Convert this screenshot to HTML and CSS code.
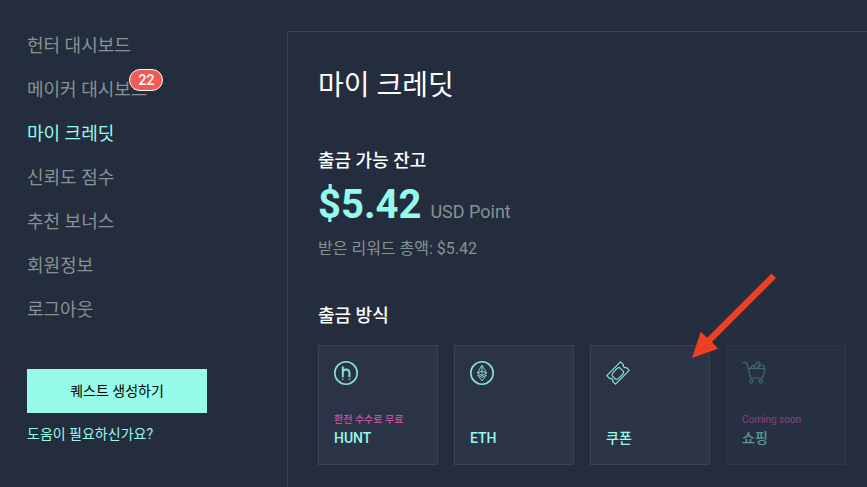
FILE: index.html
```html
<!DOCTYPE html>
<html lang="ko">
<head>
    <meta charset="UTF-8">
    <meta name="viewport" content="width=device-width, initial-scale=1.0">
    <title>마이 크레딧</title>
    <link rel="stylesheet" href="styles.css">
</head>
<body>
    <div class="page">
        <aside class="sidebar">
            <nav class="menu">
                <a href="#">헌터 대시보드</a>
                <a href="#">메이커 대시보드<span class="badge">22</span></a>
                <a href="#" class="active">마이 크레딧</a>
                <a href="#">신뢰도 점수</a>
                <a href="#">추천 보너스</a>
                <a href="#">회원정보</a>
                <a href="#">로그아웃</a>
            </nav>
            <button type="button" class="create-button">퀘스트 생성하기</button>
            <a href="#" class="help-link">도움이 필요하신가요?</a>
        </aside>

        <main class="panel">
            <h1>마이 크레딧</h1>

            <section class="balance">
                <h2>출금 가능 잔고</h2>
                <p class="amount"><strong>$5.42</strong> <span>USD Point</span></p>
                <p class="total">받은 리워드 총액: $5.42</p>
            </section>

            <section class="withdraw">
                <h2>출금 방식</h2>
                <ul class="methods">
                    <li>
                        <button type="button" class="card">
                            <svg class="icon" viewBox="0 0 24 24" aria-hidden="true">
                                <circle cx="12" cy="12" r="11.2" stroke-width="1.6"/>
                                <path d="M8.800 5.500v10.700M8.800 11.700c0-4.300 6.600-4.300 6.600 0v4.500" stroke-width="1.900"/>
                                <path d="M8.800 17.400v1.500M15.400 17.400v1.500" stroke-width="1.600" opacity=".7"/>
                            </svg>
                            <span class="note">환전 수수료 무료</span>
                            <span class="name">HUNT</span>
                        </button>
                    </li>
                    <li>
                        <button type="button" class="card">
                            <svg class="icon" viewBox="0 0 24 24" aria-hidden="true">
                                <circle cx="12" cy="12" r="11.2" stroke-width="1.6"/>
                                <path d="M12 4.200L7.400 12l4.600 2.600 4.600-2.600zM7.400 12l4.600-1.900 4.600 1.900M12 4.200v10.400M7.600 14l4.400 5.800 4.400-5.800-4.400 2.400z" stroke-width=".9"/>
                            </svg>
                            <span class="name">ETH</span>
                        </button>
                    </li>
                    <li>
                        <button type="button" class="card">
                            <svg class="icon" viewBox="0 0 24 24" aria-hidden="true">
                                <path d="M14.500.8l3 3c-.8 1.500 1 3.500 2.800 2.700l2.900 2.900L9.500 23.200l-2.900-2.900c.8-1.700-1-3.500-2.800-2.700l-3-3z"/>
                                <path d="M13.300 6.400l4.300 4.300c.2 1.400-.3 2-1 2.700l-4.300 4.200c-.8.7-1.500.9-2.600.7l-3.500-3.500c-.4-1.200-.1-2 .6-2.700l4.100-4.400c.8-.8 1.400-1.200 2.400-1.300z"/>
                            </svg>
                            <span class="name">쿠폰</span>
                        </button>
                        <svg class="arrow" viewBox="0 0 84 86" aria-hidden="true">
                            <path d="M79.500.5L84 5 20 69l6 6.700L0 85l8.700-26.300 6.500 6z"/>
                        </svg>
                    </li>
                    <li>
                        <button type="button" class="card" disabled>
                            <svg class="icon" viewBox="0 0 24 24" aria-hidden="true">
                                <path d="M.5 1.600h4.200L8.800 17h11.700l2.800-9.300H6.400M7.800 7.500l3-3.200 2.800 3M12.200 5.700l3.300-4.900 2.700 1.400-3 5.200M16.400 7.500l.7-2.700 4.200-.8 1.200 3.500"/>
                                <circle cx="9.200" cy="20.300" r="1.600"/>
                                <circle cx="18.800" cy="20.300" r="1.600"/>
                            </svg>
                            <span class="note">Coming soon</span>
                            <span class="name">쇼핑</span>
                        </button>
                    </li>
                </ul>
            </section>
        </main>
    </div>
</body>
</html>
```

FILE: styles.css
```css
* {
    box-sizing: border-box;
}

body {
    margin: 0;
    background-color: #242d3e;
    color: #fff;
    font-family: Roboto, "Noto Sans CJK KR", sans-serif;
}

h1,
h2,
p,
ul {
    margin: 0;
    padding: 0;
}

a {
    text-decoration: none;
}

button {
    border: none;
    border-radius: 0;
    font-family: inherit;
    cursor: pointer;
}

.page {
    display: flex;
    gap: 80px;
    min-height: 100vh;
    padding: 31px 0 0 27px;
}

/* Sidebar */
.sidebar {
    flex: 0 0 180px;
    padding-top: 1px;
}

.menu {
    display: flex;
    flex-direction: column;
    align-items: flex-start;
    gap: 16px;
}

.menu a {
    position: relative;
    color: #879292;
    font-size: 18px;
    line-height: 28px;
}

.menu a.active {
    color: #95faea;
}

.badge {
    position: absolute;
    top: -7px;
    right: -16px;
    width: 34px;
    height: 22px;
    border: 1px solid #fff;
    border-radius: 11px;
    background-color: #f15b55;
    color: #fff;
    font-size: 14px;
    font-weight: 500;
    line-height: 20px;
    text-align: center;
}

.create-button {
    width: 100%;
    height: 44px;
    margin: 45px 0 11px;
    padding: 0 0 2px;
    background-color: #97fbea;
    color: #000;
    font-size: 14px;
}

.help-link {
    display: block;
    color: #95faea;
    font-size: 14px;
    line-height: 20px;
}

/* Content */
.panel {
    flex: 1;
    padding: 34px 20px 20px 30px;
    border-top: 1px solid #3a4352;
    border-left: 1px solid #3a4352;
}

h1 {
    margin-bottom: 43px;
    font-size: 28px;
    font-weight: 400;
    line-height: 40px;
}

h2 {
    font-size: 18px;
    font-weight: 500;
    line-height: 24px;
}

.amount {
    display: flex;
    align-items: baseline;
    gap: 9px;
    margin: 8px 0;
    color: #879292;
    font-size: 18px;
    line-height: 24px;
}

.amount strong {
    color: #95faea;
    font-size: 40px;
    font-weight: 700;
    line-height: 48px;
}

.total {
    color: #879292;
    font-size: 16px;
    line-height: 24px;
}

.withdraw {
    margin-top: 43px;
}

.methods {
    display: flex;
    flex-wrap: wrap;
    gap: 16px;
    margin-top: 17px;
    list-style: none;
}

.methods li {
    position: relative;
}

.card {
    display: flex;
    flex-direction: column;
    align-items: flex-start;
    width: 120px;
    height: 120px;
    padding: 15px 15px 16px;
    border: 1px solid #374353;
    background-color: #2b3446;
    text-align: left;
}

.card:disabled {
    opacity: 0.5;
    cursor: default;
}

.icon {
    width: 24px;
    height: 24px;
    margin-bottom: auto;
    fill: none;
    stroke: #86e3d6;
    stroke-width: 1.2;
    stroke-linejoin: round;
}

.card:disabled .icon {
    opacity: 0.6;
}

.note {
    color: #e155b4;
    font-size: 10px;
    line-height: 16px;
}

.name {
    color: #95faea;
    font-size: 14px;
    font-weight: 500;
    line-height: 20px;
}

.arrow {
    position: absolute;
    top: -72px;
    left: 102px;
    z-index: 1;
    width: 84px;
    height: 86px;
    fill: #ee3f20;
    pointer-events: none;
}
```
